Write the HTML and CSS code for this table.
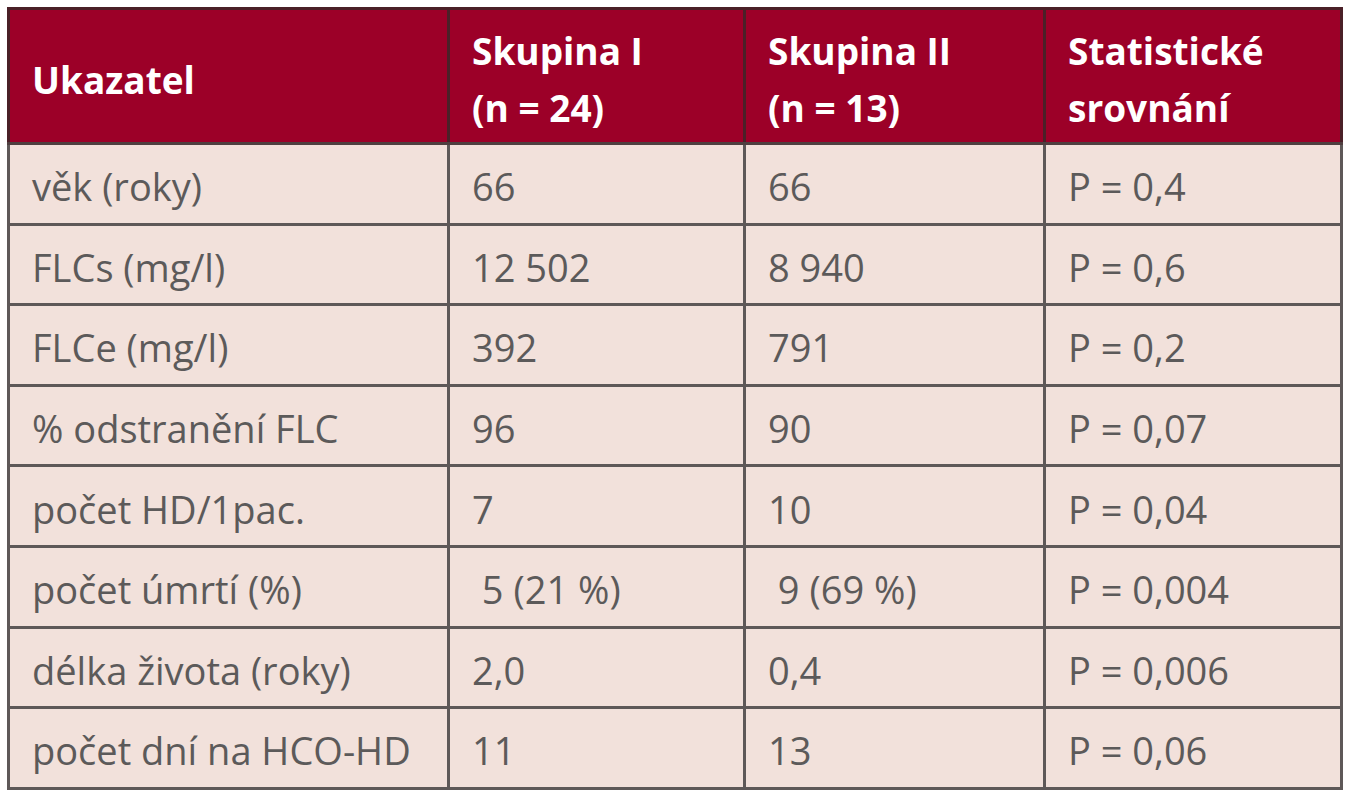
FILE: index.html
```html
<!DOCTYPE html>
<html lang="cs">
<head>
<meta charset="utf-8">
<title>Tabulka</title>
<link rel="stylesheet" href="styles.css">
</head>
<body>
<table class="data">
  <colgroup>
    <col class="c1"><col class="c2"><col class="c3"><col class="c4">
  </colgroup>
  <thead>
    <tr>
      <th>Ukazatel</th>
      <th>Skupina I<br>(n = 24)</th>
      <th>Skupina II<br>(n = 13)</th>
      <th>Statistické<br>srovnání</th>
    </tr>
  </thead>
  <tbody>
    <tr><td>věk (roky)</td><td>66</td><td>66</td><td>P = 0,4</td></tr>
    <tr><td>FLCs (mg/l)</td><td>12 502</td><td>8 940</td><td>P = 0,6</td></tr>
    <tr><td>FLCe (mg/l)</td><td>392</td><td>791</td><td>P = 0,2</td></tr>
    <tr><td>% odstranění FLC</td><td>96</td><td>90</td><td>P = 0,07</td></tr>
    <tr><td>počet HD/1pac.</td><td>7</td><td>10</td><td>P = 0,04</td></tr>
    <tr><td>počet úmrtí (%)</td><td>&nbsp;5 (21 %)</td><td>&nbsp;9 (69 %)</td><td>P = 0,004</td></tr>
    <tr><td>délka života (roky)</td><td>2,0</td><td>0,4</td><td>P = 0,006</td></tr>
    <tr><td>počet dní na HCO-HD</td><td>11</td><td>13</td><td>P = 0,06</td></tr>
  </tbody>
</table>
</body>
</html>
```
FILE: styles.css
```css
html, body {
  background: #ffffff;
}
body {
  margin: 0;
  padding: 7px 0 0 7px;
  font-family: "Open Sans", "Liberation Sans", sans-serif;
}
.data {
  border-collapse: collapse;
  width: 1333px;
  table-layout: fixed;
  background: #f2e1db;
  border: 3px solid #5e5858;
}
.c1 { width: 440px; }
.c2 { width: 296px; }
.c3 { width: 300px; }
.c4 { width: 297px; }
.data th {
  background: #9c0028;
  color: #ffffff;
  font-weight: 700;
  font-size: 37px;
  line-height: 57px;
  text-align: left;
  padding: 6px 16px 0 22px;
  height: 135px;
  box-sizing: border-box;
  border: 3px solid #4a2028;
  border-bottom-color: #4f3f40;
  white-space: nowrap;
}
.data td {
  color: #5c5a5a;
  font-size: 38px;
  line-height: 44px;
  padding: 5px 16px 0 22px;
  height: 80.6px;
  box-sizing: border-box;
  border: 3px solid #5e5858;
  white-space: nowrap;
}
```
